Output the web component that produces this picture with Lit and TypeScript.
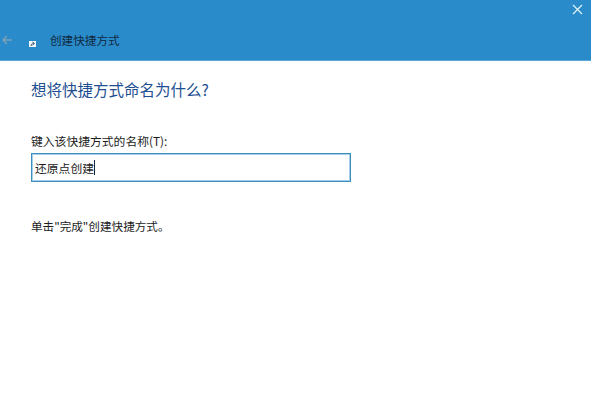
import { LitElement, html, css } from "lit";
import { customElement } from "lit/decorators.js";

@customElement("app-root")
export class AppRoot extends LitElement {
  static styles = css`
    :host {
      display: block;
      width: 591px;
      height: 420px;
      background: #fff;
      font-family: "Noto Sans CJK SC", "Liberation Sans", sans-serif;
      color: #1c1c1c;
      overflow: hidden;
    }
    .bar {
      height: 61px;
      box-sizing: border-box;
      background: #2a8bcb;
      border-bottom: 1px solid #5aa6d9;
      display: flex;
      flex-direction: column;
    }
    .top {
      height: 21px;
      display: flex;
      justify-content: flex-end;
      padding: 4px 8px 0 0;
      box-sizing: border-box;
    }
    .title-row {
      display: flex;
      align-items: center;
      height: 38px;
      padding-left: 1px;
    }
    .back { width: 12px; height: 12px; margin-top: -1px; }
    .shortcut { width: 7px; height: 6px; margin-left: 16px; margin-top: 7px; }
    .title {
      margin-left: 14px;
      font-size: 11.6px;
      line-height: 16px;
      color: #10293f;
      margin-top: 0;
    }
    .content {
      padding: 18px 0 0 31px;
      display: flex;
      flex-direction: column;
    }
    h1 {
      margin: 0;
      font-weight: 400;
      font-size: 15.5px;
      line-height: 20px;
      color: #1d4f91;
    }
    .label {
      margin-top: 34px;
      font-size: 11.8px;
      line-height: 16px;
    }
    .input {
      margin-top: 4px;
      width: 320px;
      height: 29px;
      box-sizing: border-box;
      border: 1px solid #3d8dbd;
      box-shadow: inset 0 0 0 1px #a6d0e8;
      display: flex;
      align-items: center;
      padding: 0 0 0 3px;
      font-size: 11.8px;
    }
    .caret {
      width: 1px;
      height: 15px;
      background: #10293f;
    }
    .hint {
      margin-top: 36px;
      font-size: 11.6px;
      line-height: 16px;
    }
  `;

  render() {
    return html`
      <div class="bar">
        <div class="top">
          <svg width="11" height="11" viewBox="0 0 11 11">
            <path d="M1 1 L10 10 M10 1 L1 10" stroke="#e4f2fb" stroke-width="1.2" fill="none" />
          </svg>
        </div>
        <div class="title-row">
          <svg class="back" viewBox="0 0 12 12">
            <path d="M11 6 H2 M6 2 L2 6 L6 10" stroke="#7f9fb6" stroke-width="1.4" fill="none" />
          </svg>
          <svg class="shortcut" viewBox="0 0 7 6">
            <rect width="7" height="6" fill="#f4f8fb" />
            <path d="M2 5 C2 3.5 3 2.5 4.5 2.5 M3.5 1 L5.5 2.5 L3.5 4" stroke="#1b3f66" stroke-width="0.9" fill="none" />
          </svg>
          <span class="title">创建快捷方式</span>
        </div>
      </div>
      <div class="content">
        <h1>想将快捷方式命名为什么?</h1>
        <div class="label">键入该快捷方式的名称(T):</div>
        <div class="input"><span>还原点创建</span><span class="caret"></span></div>
        <div class="hint">单击"完成"创建快捷方式。</div>
      </div>
    `;
  }
}
